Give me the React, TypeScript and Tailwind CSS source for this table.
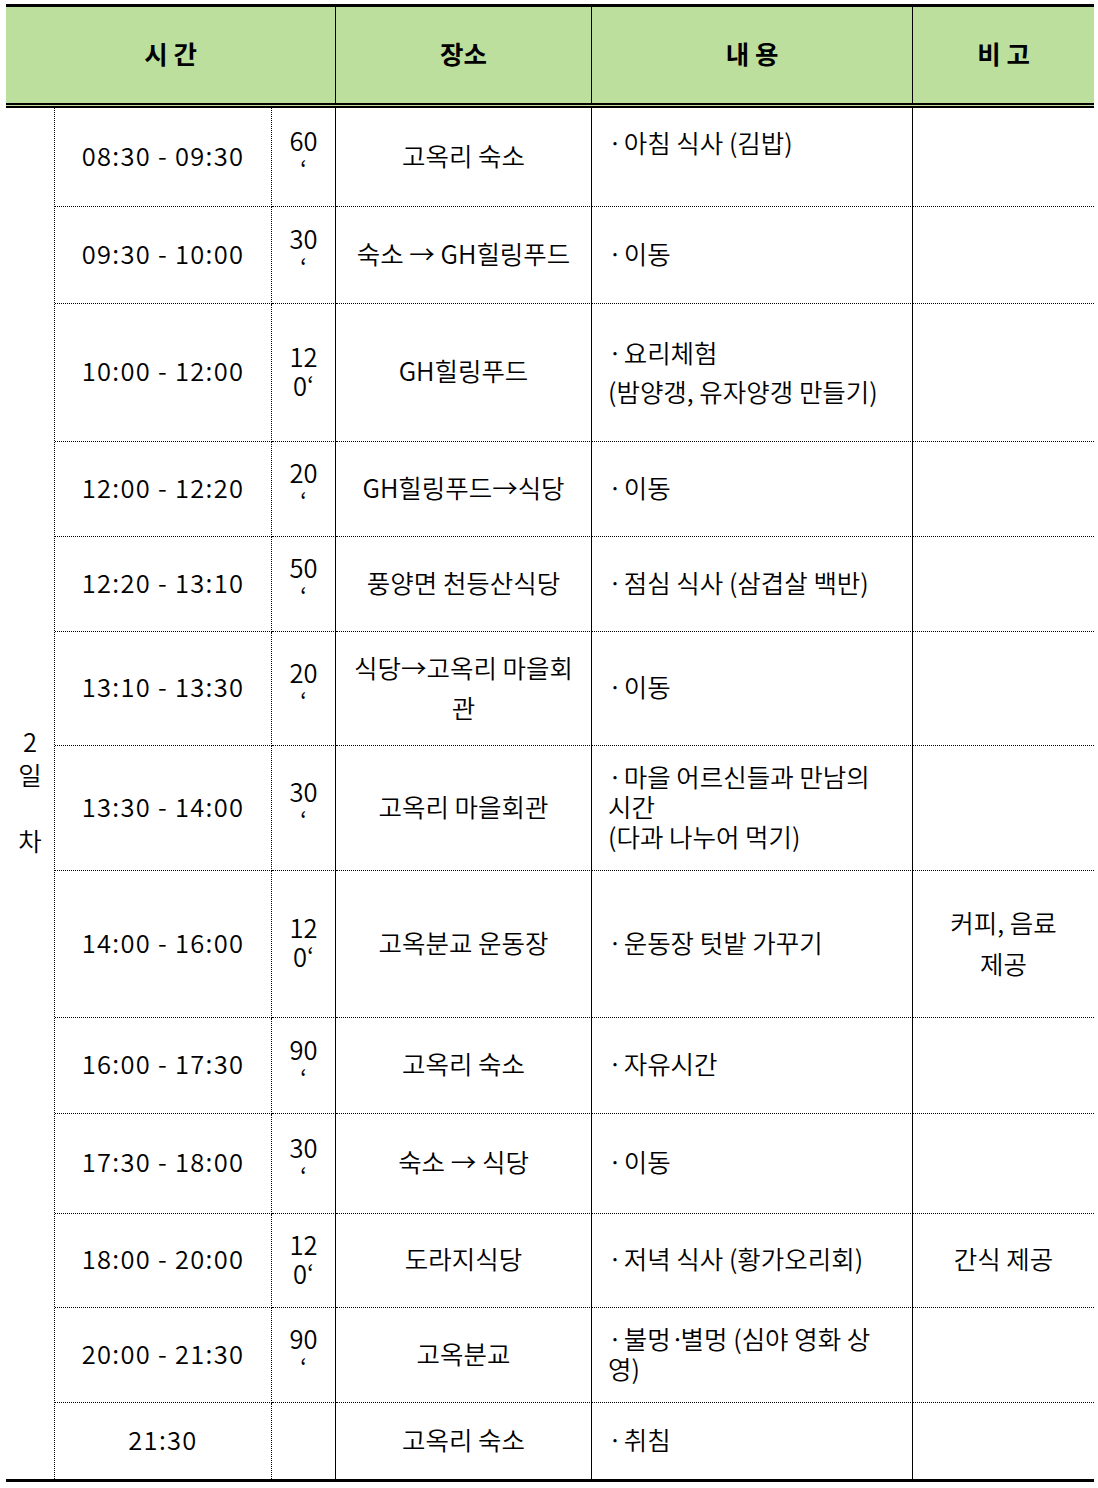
import React from "react";

type Row = {
  h: string;
  time: string;
  dur: React.ReactNode;
  place: React.ReactNode;
  content: React.ReactNode;
  note?: React.ReactNode;
  contentTop?: boolean;
};

const D = () => <span className="inline-block w-[10px] text-center">·</span>;

const rows: Row[] = [
  { h: "h-[99px]", time: "08:30 - 09:30", dur: <>60<br />‘</>, place: "고옥리 숙소", content: <><D /> 아침 식사 (김밥)</>, contentTop: true },
  { h: "h-[97px]", time: "09:30 - 10:00", dur: <>30<br />‘</>, place: "숙소 → GH힐링푸드", content: <><D /> 이동</> },
  { h: "h-[138px]", time: "10:00 - 12:00", dur: <>12<br />0‘</>, place: "GH힐링푸드", content: <div className="leading-[39px]"><D /> 요리체험<br />(밤양갱, 유자양갱 만들기)</div> },
  { h: "h-[95px]", time: "12:00 - 12:20", dur: <>20<br />‘</>, place: "GH힐링푸드→식당", content: <><D /> 이동</> },
  { h: "h-[95px]", time: "12:20 - 13:10", dur: <>50<br />‘</>, place: "풍양면 천등산식당", content: <><D /> 점심 식사 (삼겹살 백반)</> },
  { h: "h-[114px]", time: "13:10 - 13:30", dur: <>20<br />‘</>, place: <div className="leading-[40px]">식당→고옥리 마을회<br />관</div>, content: <><D /> 이동</> },
  { h: "h-[125px]", time: "13:30 - 14:00", dur: <>30<br />‘</>, place: "고옥리 마을회관", content: <div className="leading-[30px]"><D /> 마을 어르신들과 만남의<br />시간<br />(다과 나누어 먹기)</div> },
  { h: "h-[147px]", time: "14:00 - 16:00", dur: <>12<br />0‘</>, place: "고옥분교 운동장", content: <><D /> 운동장 텃밭 가꾸기</>, note: <div className="leading-[41px]">커피, 음료<br />제공</div> },
  { h: "h-[96px]", time: "16:00 - 17:30", dur: <>90<br />‘</>, place: "고옥리 숙소", content: <><D /> 자유시간</> },
  { h: "h-[100px]", time: "17:30 - 18:00", dur: <>30<br />‘</>, place: "숙소 → 식당", content: <><D /> 이동</> },
  { h: "h-[94px]", time: "18:00 - 20:00", dur: <>12<br />0‘</>, place: "도라지식당", content: <><D /> 저녁 식사 (황가오리회)</>, note: "간식 제공" },
  { h: "h-[95px]", time: "20:00 - 21:30", dur: <>90<br />‘</>, place: "고옥분교", content: <div className="leading-[30px]"><D /> 불멍<D />별멍 (심야 영화 상<br />영)</div> },
  { h: "h-[76px]", time: "21:30", dur: "", place: "고옥리 숙소", content: <><D /> 취침</> },
];

export default function App() {
  return (
    <div className="w-[1098px] h-[1488px] bg-white font-['Noto_Sans_CJK_KR','Noto_Sans',sans-serif] text-[25.5px] font-[350] text-black">
      <div className="ml-[6px] pt-[4px] w-[1088px]">
        {/* Header */}
        <div className="flex h-[104px] border-t-[3px] border-b-[5px] border-double border-black bg-[#bddf9d] font-bold [border-top-style:solid]">
          <div className="w-[330px] border-r border-black flex items-center justify-center pb-[4px]">시 간</div>
          <div className="w-[256px] border-r border-black flex items-center justify-center pb-[4px]">장소</div>
          <div className="w-[321px] border-r border-black flex items-center justify-center pb-[4px]">내 용</div>
          <div className="flex-1 flex items-center justify-center pb-[4px]">비 고</div>
        </div>
        {/* Body */}
        <div className="grid grid-cols-[49px_217px_64px_256px_321px_181px] border-b-[3px] border-black">
          <div className="col-start-1 [grid-row:1/span_13] border-r border-dotted border-black flex items-center justify-center text-center leading-[33px] pb-[8px]">
            <div>2<br />일<br /><br />차</div>
          </div>
          {rows.map((r, i) => {
            const last = i === rows.length - 1;
            const bb = last ? "" : "border-b [border-bottom-style:dotted]";
            return (
              <React.Fragment key={i}>
                <div className={`${r.h} ${bb} border-r border-dotted border-black flex items-center justify-center whitespace-nowrap tracking-[1.3px] pb-[4px]`}>
                  {r.time}
                </div>
                <div className={`${r.h} ${bb} border-r border-black flex items-center justify-center text-center leading-[29px] pb-[6px]`}>
                  <div>{r.dur}</div>
                </div>
                <div className={`${r.h} ${bb} border-r border-black flex items-center justify-center text-center whitespace-nowrap pb-[4px]`}>
                  {r.place}
                </div>
                <div className={`${r.h} ${bb} border-r border-black whitespace-nowrap pl-[16px] ${r.contentTop ? "pt-[15px]" : "flex items-center pb-[4px]"}`}>
                  <div>{r.content}</div>
                </div>
                <div className={`${r.h} ${bb} border-black flex items-center justify-center text-center whitespace-nowrap pb-[4px]`}>
                  {r.note ?? ""}
                </div>
              </React.Fragment>
            );
          })}
        </div>
      </div>
    </div>
  );
}
